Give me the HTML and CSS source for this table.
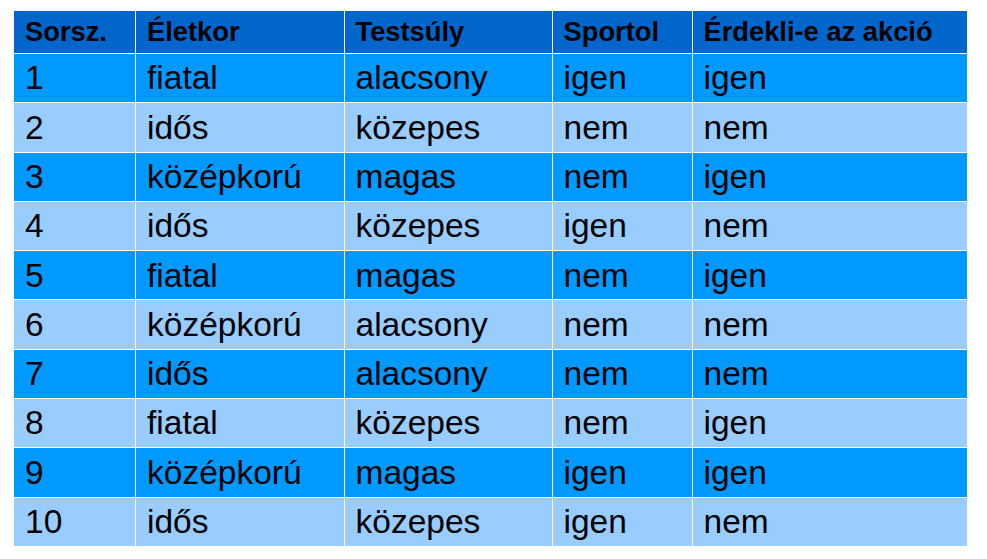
FILE: index.html
```html
<!DOCTYPE html>
<html lang="hu">
<head>
<meta charset="utf-8">
<title>Táblázat</title>
<link rel="stylesheet" href="styles.css">
</head>
<body>
<div class="table" role="table">
  <div class="cell head">Sorsz.</div><div class="cell head">Életkor</div><div class="cell head">Testsúly</div><div class="cell head">Sportol</div><div class="cell head">Érdekli-e az akció</div>
  <div class="cell odd">1</div><div class="cell odd">fiatal</div><div class="cell odd">alacsony</div><div class="cell odd">igen</div><div class="cell odd">igen</div>
  <div class="cell even">2</div><div class="cell even">idős</div><div class="cell even">közepes</div><div class="cell even">nem</div><div class="cell even">nem</div>
  <div class="cell odd">3</div><div class="cell odd">középkorú</div><div class="cell odd">magas</div><div class="cell odd">nem</div><div class="cell odd">igen</div>
  <div class="cell even">4</div><div class="cell even">idős</div><div class="cell even">közepes</div><div class="cell even">igen</div><div class="cell even">nem</div>
  <div class="cell odd">5</div><div class="cell odd">fiatal</div><div class="cell odd">magas</div><div class="cell odd">nem</div><div class="cell odd">igen</div>
  <div class="cell even">6</div><div class="cell even">középkorú</div><div class="cell even">alacsony</div><div class="cell even">nem</div><div class="cell even">nem</div>
  <div class="cell odd">7</div><div class="cell odd">idős</div><div class="cell odd">alacsony</div><div class="cell odd">nem</div><div class="cell odd">nem</div>
  <div class="cell even">8</div><div class="cell even">fiatal</div><div class="cell even">közepes</div><div class="cell even">nem</div><div class="cell even">igen</div>
  <div class="cell odd">9</div><div class="cell odd">középkorú</div><div class="cell odd">magas</div><div class="cell odd">igen</div><div class="cell odd">igen</div>
  <div class="cell even">10</div><div class="cell even">idős</div><div class="cell even">közepes</div><div class="cell even">igen</div><div class="cell even">nem</div>
</div>
</body>
</html>
```
FILE: styles.css
```css
html, body {
  margin: 0;
  padding: 0;
  background: #ffffff;
}

body {
  padding: 11px 0 0 14px;
  font-family: "Liberation Sans", Arial, sans-serif;
  color: #000000;
}

.table {
  display: grid;
  width: 953px;
  grid-template-columns: 121px 207.5px 207px 139px 274.5px;
  grid-template-rows: 42px repeat(10, 48.3px);
  gap: 1px;
  background: #ffffff;
}

.cell {
  display: flex;
  align-items: center;
  padding-left: 11px;
  font-size: 33.5px;
  line-height: 1;
  white-space: nowrap;
  overflow: hidden;
}

.head {
  background: #0066cc;
  font-size: 27.3px;
  font-weight: bold;
}

.odd {
  background: #0099ff;
}

.even {
  background: #99ccff;
}
```
